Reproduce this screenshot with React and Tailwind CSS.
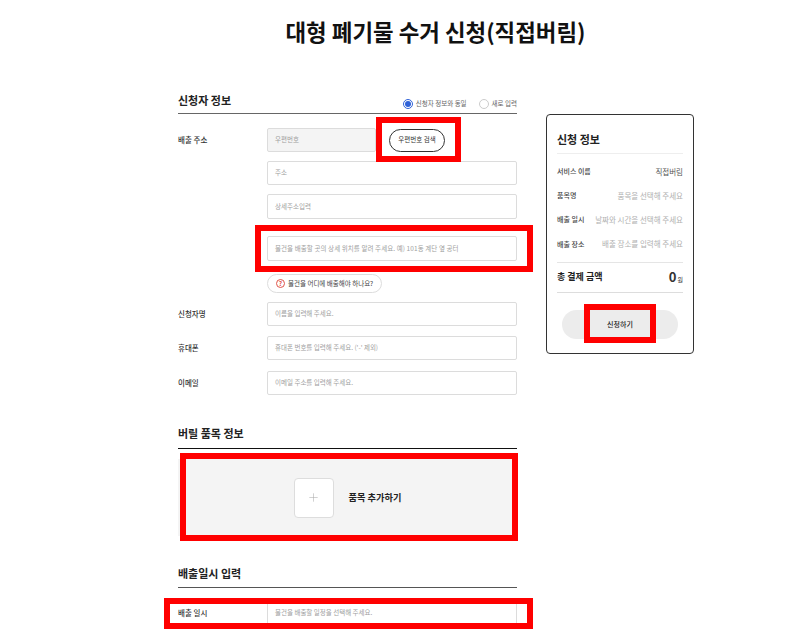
import { Plus } from 'lucide-react';

const FONT = "font-['Noto_Sans_CJK_KR','Noto_Sans',sans-serif]";

function Field({ placeholder, className = '' }) {
  return (
    <div className={`flex h-[24px] items-center whitespace-nowrap rounded-[2px] border border-[#dcdcdc] bg-white pl-[7px] text-[6.5px] text-[#a0a0a0] ${className}`}>
      {placeholder}
    </div>
  );
}

function FormRow({ label, children, className = '' }) {
  return (
    <div className={`flex ${className}`}>
      <div className="w-[89px] shrink-0 pt-[6px] text-[7.5px] font-medium leading-[12px] text-[#333]">{label}</div>
      <div className="min-w-0 flex-1">{children}</div>
    </div>
  );
}

function SectionHead({ title, line = 'border-[#222]', titleClass = 'pt-[5px]', children }) {
  return (
    <div className={`flex h-[27px] items-start justify-between border-b ${line}`}>
      <h2 className={`text-[11px] font-bold leading-[16px] text-[#222] ${titleClass}`}>{title}</h2>
      {children}
    </div>
  );
}

function Radio({ checked, label }) {
  return (
    <div className="flex items-center gap-[3px]">
      <span className={`flex h-[10px] w-[10px] items-center justify-center rounded-full border ${checked ? 'border-[#2f62d8]' : 'border-[#ccc]'}`}>
        {checked ? <span className="h-[6px] w-[6px] rounded-full bg-[#2f62d8]" /> : null}
      </span>
      <span className="text-[6.5px] text-[#666]">{label}</span>
    </div>
  );
}

function SummaryRow({ label, value, dark }) {
  return (
    <div className="flex h-[24.25px] items-center justify-between whitespace-nowrap">
      <span className="text-[7px] font-medium text-[#444]">{label}</span>
      <span className={`text-[7.5px] ${dark ? 'text-[#555]' : 'text-[#b0b0b0]'}`}>{value}</span>
    </div>
  );
}

function Highlight({ className }) {
  return <div className={`absolute border-[6px] border-[#ff0000] ${className}`} />;
}

export default function App() {
  return (
    <div className={`relative h-[631px] w-[791px] overflow-hidden bg-white ${FONT}`}>
      <h1 className="pl-[80px] pt-[15px] text-center text-[22.4px] font-bold leading-[33px] text-[#111]">
        대형 폐기물 수거 신청(직접버림)
      </h1>

      <div className="mt-[39px] flex pl-[178px]">
        <div className="w-[339px] shrink-0">
          <SectionHead title="신청자 정보" line="border-[#666]">
            <div className="mt-[12px] flex gap-[12px]">
              <Radio checked label="신청자 정보와 동일" />
              <Radio label="새로 입력" />
            </div>
          </SectionHead>

          <FormRow label="배출 주소" className="mt-[14px]">
            <div className="flex items-center gap-[13px]">
              <Field placeholder="우편번호" className="w-[109px] !bg-[#f4f4f4]" />
              <div className="flex h-[23px] w-[56px] items-center justify-center rounded-full border border-[#333] text-[6.5px] text-[#333]">
                우편번호 검색
              </div>
            </div>
            <Field placeholder="주소" className="mt-[9px]" />
            <Field placeholder="상세주소입력" className="mt-[9px] h-[25px]" />
            <Field placeholder="물건을 배출할 곳의 상세 위치를 알려 주세요. 예) 101동 계단 옆 공터" className="mt-[17px] h-[25px] tracking-[0.08px]" />
            <div className="mt-[13px] flex h-[19px] w-[115px] items-center gap-[3px] rounded-full border border-[#ddd] pl-[8px] text-[6.5px] text-[#444]">
              <span className="flex h-[9px] w-[9px] items-center justify-center rounded-full border border-[#e0544a] text-[6.5px] font-bold leading-none text-[#e0544a]">?</span>
              물건을 어디에 배출해야 하나요?
            </div>
          </FormRow>

          <FormRow label="신청자명" className="mt-[9px]">
            <Field placeholder="이름을 입력해 주세요." />
          </FormRow>
          <FormRow label="휴대폰" className="mt-[10px]">
            <Field placeholder="휴대폰 번호를 입력해 주세요. ('-' 제외)" />
          </FormRow>
          <FormRow label="이메일" className="mt-[11px]">
            <Field placeholder="이메일 주소를 입력해 주세요." />
          </FormRow>

          <div className="mt-[27px]">
            <SectionHead title="버릴 품목 정보" line="border-[#111]" titleClass="pt-[3px]" />
          </div>
          <div className="mt-[10px] flex h-[77px] items-center justify-center gap-[15px] bg-[#f4f4f4]">
            <div className="flex h-[40px] w-[40px] items-center justify-center rounded-[4px] border border-[#ddd] bg-white">
              <Plus size={13} strokeWidth={1} className="text-[#aaa]" />
            </div>
            <span className="text-[9.2px] font-bold text-[#222]">품목 추가하기</span>
          </div>

          <div className="mt-[25px]">
            <SectionHead title="배출일시 입력" line="border-[#555]" titleClass="pt-[4px]" />
          </div>
          <FormRow label="배출 일시" className="mt-[13px]">
            <Field placeholder="물건을 배출할 일정을 선택해 주세요." />
          </FormRow>
        </div>

        <aside className="ml-[29px] mt-[27px] h-[240px] w-[148px] shrink-0 self-start rounded-[4px] border border-[#333] bg-white px-[10px]">
          <h3 className="mt-[17px] border-b border-[#eee] pb-[6px] text-[11px] font-bold leading-[15px] text-[#222]">신청 정보</h3>
          <div className="mt-[5px] border-b border-[#e5e5e5] pb-[6px]">
            <SummaryRow label="서비스 이름" value="직접버림" dark />
            <SummaryRow label="품목명" value="품목을 선택해 주세요" />
            <SummaryRow label="배출 일시" value="날짜와 시간을 선택해 주세요" />
            <SummaryRow label="배출 장소" value="배출 장소를 입력해 주세요" />
          </div>
          <div className="flex h-[30px] items-center justify-between border-b border-[#ddd] pb-[1px]">
            <span className="text-[9px] font-bold text-[#222]">총 결제 금액</span>
            <span className="text-[6px] text-[#333]"><span className="mr-[1px] text-[13px] font-bold leading-none">0</span>원</span>
          </div>
          <div className="mx-[5px] mt-[17px] flex h-[29px] items-center justify-center rounded-full bg-[#ececec] text-[7px] font-medium text-[#222]">
            신청하기
          </div>
        </aside>
      </div>

      <Highlight className="left-[376px] top-[117px] h-[45px] w-[85px]" />
      <Highlight className="left-[255px] top-[225px] h-[47px] w-[278px]" />
      <Highlight className="left-[584px] top-[304px] h-[39px] w-[72px]" />
      <Highlight className="left-[180px] top-[453px] h-[88px] w-[338px]" />
      <Highlight className="left-[164px] top-[598px] h-[31px] w-[369px]" />
    </div>
  );
}
